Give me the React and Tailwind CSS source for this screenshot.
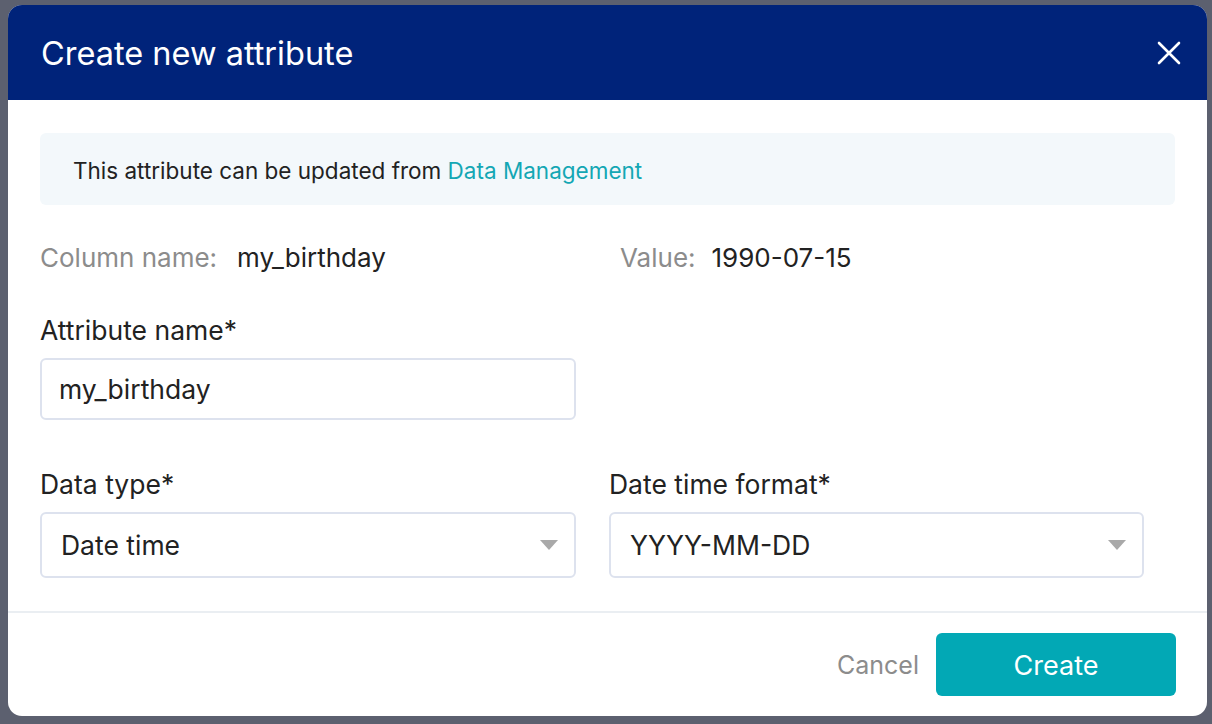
function Caret() {
  return (
    <svg width="18" height="10" viewBox="0 0 18 10" className="shrink-0">
      <path d="M0 0 L18 0 L9 10 Z" fill="#a9a9a9" />
    </svg>
  );
}

function CloseIcon() {
  return (
    <svg width="24" height="24" viewBox="0 0 24 24" className="shrink-0">
      <path d="M2 2 L22 22 M22 2 L2 22" stroke="white" strokeWidth="2.6" strokeLinecap="round" />
    </svg>
  );
}

function Select({ value }) {
  return (
    <div className="flex h-[66px] items-center justify-between rounded-md border-2 border-[#dde2ee] bg-white pl-[19px] pr-[16px]">
      <span className="pt-[2px] text-[26.5px] text-[#222]">{value}</span>
      <Caret />
    </div>
  );
}

export default function App() {
  return (
    <div className="min-h-[724px] bg-[#5c606f] pt-[5px] pl-[8px] pr-[5px] pb-[8px] font-['Inter',sans-serif]">
      <div className="h-[711px] overflow-hidden rounded-[14px] bg-white flex flex-col">
        <div className="flex h-[95px] shrink-0 items-center justify-between bg-[#00237a] pl-[33px] pr-[26px]">
          <h1 className="pt-[3px] text-[32.5px] text-white">Create new attribute</h1>
          <CloseIcon />
        </div>

        <div className="px-[32px] pt-[33px]">
          <div className="flex h-[72px] items-center rounded-md bg-[#f3f8fb] px-[33px] pt-[3px] text-[22.5px] text-[#222]">
            This attribute can be updated from&nbsp;<span className="text-[#14a7b4]">Data Management</span>
          </div>

          <div className="mt-[37px] flex text-[26px] leading-[32px]">
            <div className="w-[580px]">
              <span className="text-[#8c8c8c]">Column name:</span>
              <span className="ml-[20px] text-[#222]">my_birthday</span>
            </div>
            <div>
              <span className="text-[#8c8c8c]">Value:</span>
              <span className="ml-[16px] text-[#222]">1990-07-15</span>
            </div>
          </div>

          <div className="mt-[40px] w-[536px]">
            <div className="text-[26.5px] leading-[32px] text-[#222]">Attribute name*</div>
            <div className="mt-[12px] flex h-[62px] items-center rounded-md border-2 border-[#dde2ee] pl-[17px] pt-[2px] text-[26.5px] text-[#222]">
              my_birthday
            </div>
          </div>

          <div className="mt-[48px] grid grid-cols-[536px_535px] gap-x-[33px]">
            <div>
              <div className="text-[26.5px] leading-[32px] text-[#222]">Data type*</div>
              <div className="mt-[12px]">
                <Select value="Date time" />
              </div>
            </div>
            <div>
              <div className="text-[26.5px] leading-[32px] text-[#222]">Date time format*</div>
              <div className="mt-[12px]">
                <Select value="YYYY-MM-DD" />
              </div>
            </div>
          </div>
        </div>

        <div className="mt-[33px] border-t-2 border-[#eaeef2]" />

        <div className="flex items-center justify-end gap-[17px] px-[31px] pt-[20px]">
          <button className="pt-[2px] text-[25px] text-[#8c8c8c]">Cancel</button>
          <button className="h-[63px] w-[240px] rounded-md bg-[#02a8b5] pt-[3px] text-[27px] text-white">Create</button>
        </div>
      </div>
    </div>
  );
}
